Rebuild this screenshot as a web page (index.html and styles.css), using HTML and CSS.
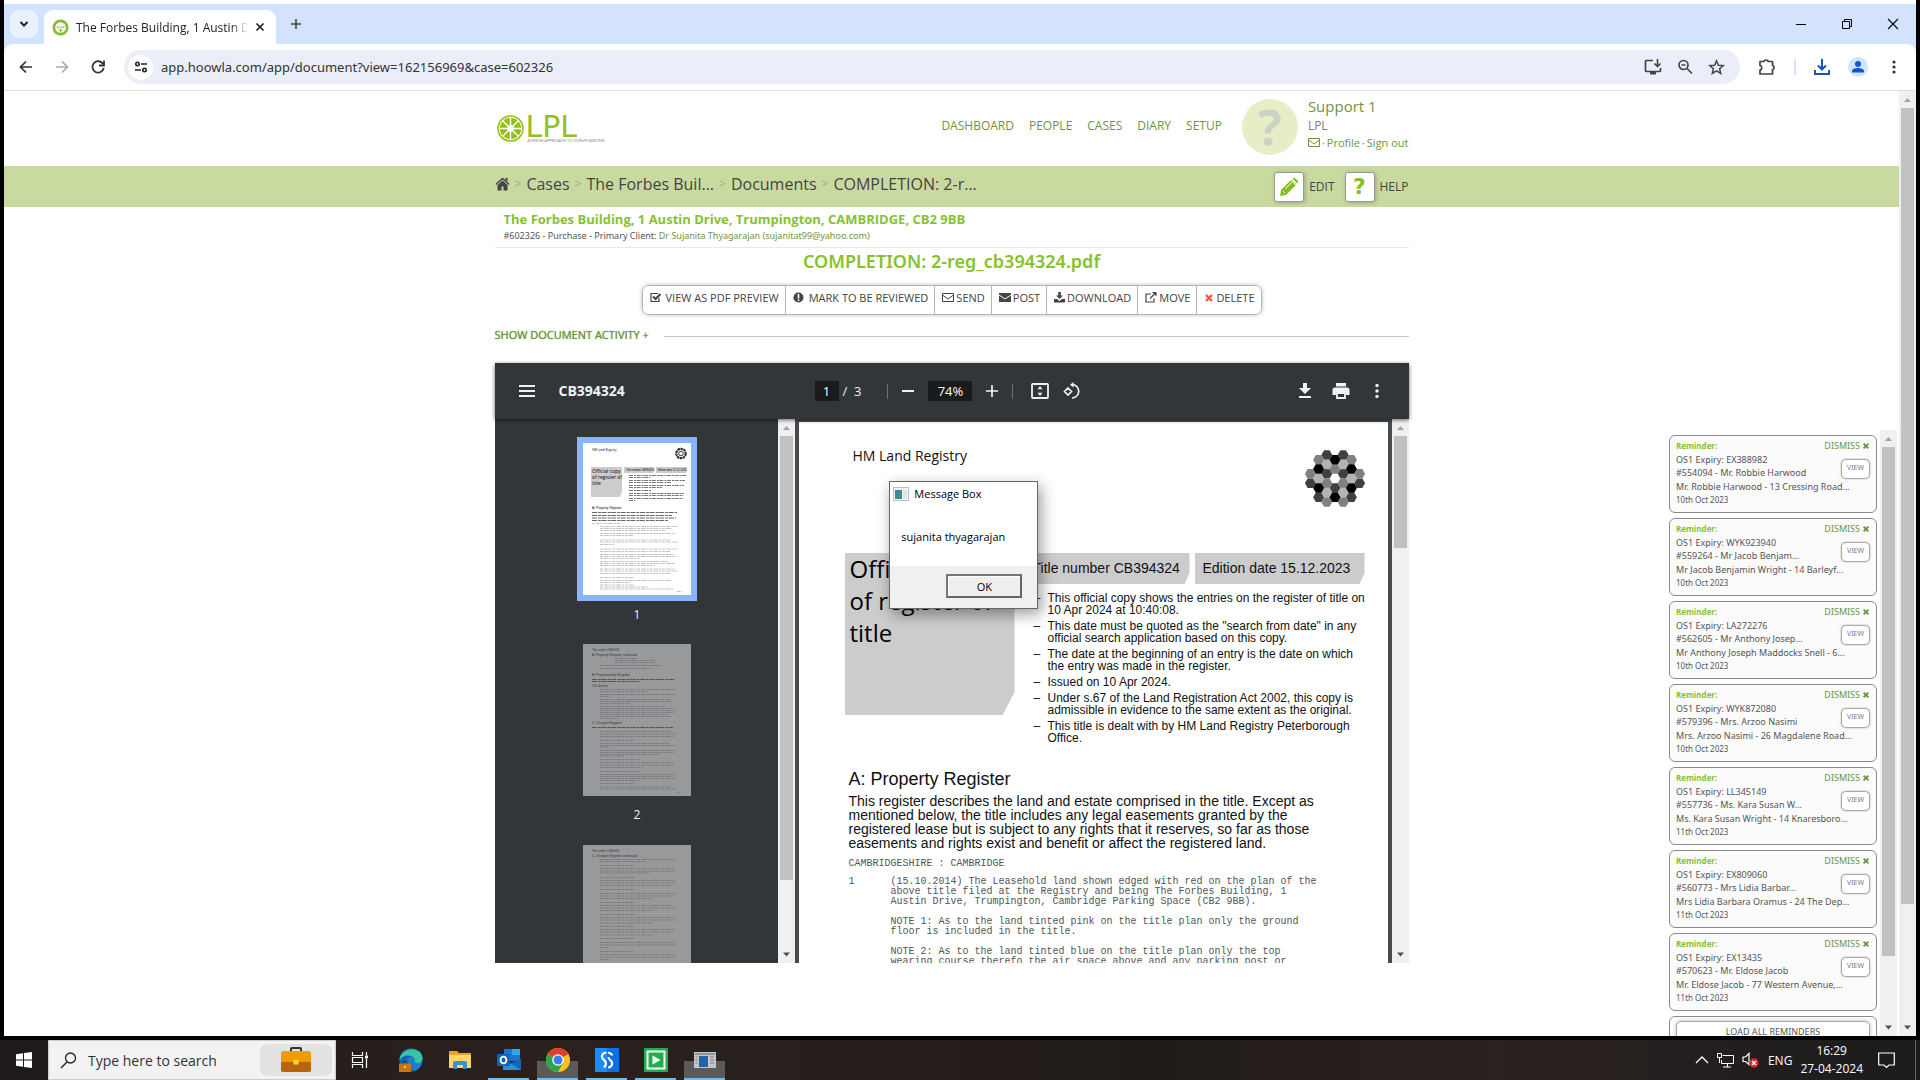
FILE: index.html
```html
<!DOCTYPE html>
<html lang="en">
<head>
<meta charset="utf-8">
<title>The Forbes Building, 1 Austin Drive</title>
<link rel="stylesheet" href="styles.css">
</head>
<body>
<svg class="defs" aria-hidden="true">
  <symbol id="i-x" viewBox="0 0 10 10"><path d="M2 2l6 6M8 2l-6 6" stroke="currentColor" stroke-width="2.4"/></symbol>
  <symbol id="i-mail" viewBox="0 0 12 11"><path d="M.5 1.5h11v8H.5zM.5 3l5.500 4 5.500-4" fill="none" stroke="currentColor"/></symbol>
  <symbol id="i-up" viewBox="0 0 17 17"><path d="M5 11l3.500-4 3.500 4z" fill="#a3a3a3"/></symbol>
  <symbol id="i-down" viewBox="0 0 17 17"><path d="M5 6.500l3.500 4 3.500-4z" fill="#505050"/></symbol>
  <symbol id="hex" viewBox="-6 -6 12 12"><path d="M-5.500 0l2.750-4.750h5.500L5.500 0l-2.750 4.750h-5.500z"/></symbol>
</svg>
<div class="desktop">
  <section class="browser">
    <div class="tabs">
      <button class="tab-search" aria-label="Search tabs"><svg width="10" height="10" viewBox="0 0 10 10"><path d="M1.500 3L5 6.500 8.500 3" fill="none" stroke="#222" stroke-width="2"/></svg></button>
      <div class="tab">
        <svg width="17" height="17" viewBox="0 0 17 17"><circle cx="8.500" cy="8.500" r="8" fill="#85bb36"/><circle cx="8.500" cy="8.500" r="5.300" fill="#fff"/><path d="M5 7a1.500 1.500 0 103 .5M9 7.500A1.500 1.500 0 1012 7M8.500 9.500v4M6.500 12l2-1.500 2 1.500" stroke="#85bb36" fill="none"/></svg>
        <span class="tab-title">The Forbes Building, 1 Austin Drive</span>
        <button class="bare" aria-label="Close tab"><svg width="10" height="10" viewBox="0 0 10 10"><path d="M1.500 1.500l7 7M8.500 1.500l-7 7" stroke="#222" stroke-width="1.700"/></svg></button>
      </div>
      <button class="bare new-tab" aria-label="New tab"><svg width="12" height="12" viewBox="0 0 12 12"><path d="M6 1v10M1 6h10" stroke="#444" stroke-width="1.600"/></svg></button>
      <div class="window-buttons">
        <button class="bare" aria-label="Minimise"><svg width="12" height="12"><path d="M1 6.500h10" stroke="#000"/></svg></button>
        <button class="bare" aria-label="Restore"><svg width="12" height="12"><path d="M1.500 3.500h7v7h-7zM3.500 3.500v-2h7v7h-2" fill="none" stroke="#000"/></svg></button>
        <button class="bare" aria-label="Close"><svg width="12" height="12"><path d="M1 1l10 10M11 1L1 11" stroke="#000" stroke-width="1.100"/></svg></button>
      </div>
    </div>
    <div class="toolbar">
      <button class="bare tool" aria-label="Back"><svg width="16" height="16" viewBox="0 0 16 16"><path d="M14 8H3M8 2.500L2.500 8 8 13.500" fill="none" stroke="#333" stroke-width="1.700"/></svg></button>
      <button class="bare tool" aria-label="Forward"><svg width="16" height="16" viewBox="0 0 16 16"><path d="M2 8h11M8 2.500L13.500 8 8 13.500" fill="none" stroke="#aaa" stroke-width="1.700"/></svg></button>
      <button class="bare tool" aria-label="Reload"><svg width="16" height="16" viewBox="0 0 16 16"><path d="M13 5A5.700 5.700 0 1013.700 9M14 1.500v5H9" fill="none" stroke="#333" stroke-width="1.800"/></svg></button>
      <div class="omnibox">
        <span class="site-info"><svg width="14" height="14" viewBox="0 0 14 14"><g fill="none" stroke="#222" stroke-width="1.600"><circle cx="3.500" cy="4" r="1.700"/><path d="M7 4h6M1 10h6"/><circle cx="10.500" cy="10" r="1.700"/></g></svg></span>
        <input class="url" aria-label="Address" value="app.hoowla.com/app/document?view=162156969&amp;case=602326">
        <button class="bare" aria-label="Install"><svg width="18" height="16" viewBox="0 0 18 16"><path d="M9 1.500H2.500a1 1 0 00-1 1v9a1 1 0 001 1h13a1 1 0 001-1V9" fill="none" stroke="#444" stroke-width="1.700"/><path d="M6 13h6v2.500H6z" fill="#444"/><path d="M13.500 0v7M10.500 4.500l3 3 3-3" fill="none" stroke="#444" stroke-width="1.600"/></svg></button>
        <button class="bare" aria-label="Zoom"><svg width="16" height="16" viewBox="0 0 16 16"><g fill="none" stroke="#444" stroke-width="1.700"><circle cx="6.500" cy="6" r="4.500"/><path d="M10 9.500l5 5M4.500 6h4"/></g></svg></button>
        <button class="bare" aria-label="Bookmark"><svg width="17" height="16" viewBox="0 0 17 16"><path d="M8.500 1.800l1.900 4.400 4.800.4-3.600 3.100 1.100 4.700-4.200-2.500-4.200 2.500 1.100-4.700-3.600-3.100 4.800-.4z" fill="none" stroke="#444" stroke-width="1.500"/></svg></button>
      </div>
      <button class="bare" aria-label="Extensions"><svg width="18" height="18" viewBox="0 0 18 18"><path d="M2 3.500h4a2 1.500 0 014 0h4.500v4a1.500 2 0 010 4V16H2v-4a1.500 2 0 000-4.500z" fill="none" stroke="#444" stroke-width="1.700" stroke-linejoin="round"/></svg></button>
      <span class="tool-divider"></span>
      <button class="bare" aria-label="Downloads"><svg width="16" height="16" viewBox="0 0 16 16"><path d="M8 0v10M4 6.500l4 4 4-4M1 11v4h14v-4" fill="none" stroke="#1456b8" stroke-width="2"/></svg></button>
      <button class="bare account-button" aria-label="Account"><svg width="20" height="20"><circle cx="10" cy="10" r="10" fill="#d3e3fd"/><circle cx="10" cy="7" r="3" fill="#0b57d0"/><path d="M4 15.500v-1.500c0-4 12-4 12 0v1.500z" fill="#0b57d0"/></svg></button>
      <button class="bare" aria-label="Menu"><svg width="4" height="16"><g fill="#333"><circle cx="2" cy="3" r="1.600"/><circle cx="2" cy="8" r="1.600"/><circle cx="2" cy="13" r="1.600"/></g></svg></button>
    </div>

    <div class="viewport">
      <main class="site">
        <header class="container site-head">
          <a class="logo" href="#" aria-label="LPL home">
            <svg width="27" height="27" viewBox="0 0 27 27"><g fill="none" stroke="#93c01f"><circle cx="13.500" cy="13.500" r="12.500" stroke-width="1.600"/><circle cx="13.500" cy="13.500" r="7" stroke-width="7.500"/></g><path d="M13.500 2v23M2 13.500h23M5.400 5.400l16.200 16.200M21.600 5.400L5.400 21.600" stroke="#fff" stroke-width="1.400"/><circle cx="13.500" cy="13.500" r="3" fill="#fff"/></svg>
            <span class="logo-words"><span class="logo-name">LPL</span><span class="logo-tag">A FRESH APPROACH TO CONVEYANCING</span></span>
          </a>
          <nav class="main-nav"><a href="#">DASHBOARD</a><a href="#">PEOPLE</a><a href="#">CASES</a><a href="#">DIARY</a><a href="#">SETUP</a></nav>
          <div class="avatar">?</div>
          <div class="account">
            <a class="account-name" href="#">Support 1</a>
            <span>LPL</span>
            <span class="account-links"><a href="#" aria-label="Messages"><svg width="12" height="11"><use href="#i-mail"/></svg></a> · <a href="#">Profile</a> · <a href="#">Sign out</a></span>
          </div>
        </header>
        <div class="crumb-bar">
          <div class="container crumb-row">
            <nav class="crumbs" aria-label="Breadcrumb">
              <a href="#" aria-label="Home"><svg width="15" height="14" viewBox="0 0 15 14"><path d="M7.500 3.500L2.500 8v5.500h4v-4h2v4h4V8z" fill="#444"/><path d="M.8 7.500l6.700-6 6.700 6" fill="none" stroke="#444" stroke-width="1.500"/><path d="M10.500 1h2v3.500l-2-1.500z" fill="#444"/></svg></a>
              <i>&gt;</i><a href="#">Cases</a><i>&gt;</i><a href="#">The Forbes Buil...</a><i>&gt;</i><a href="#">Documents</a><i>&gt;</i><span>COMPLETION: 2-r...</span>
            </nav>
            <button class="bar-action"><span class="tile"><svg width="20" height="20" viewBox="0 0 20 20"><path d="M1 19l1-6L12.500 2.500l5 5L7 18z" fill="#86bf22"/><path d="M13.500 1.500q1.500-1.500 3 0l2 2q1.500 1.500 0 3z" fill="#86bf22"/><path d="M4 14l2 2M6 12l7-7M12 3.200l4.800 4.800" stroke="#fff"/></svg></span>EDIT</button>
            <button class="bar-action"><span class="tile tile-mark">?</span>HELP</button>
          </div>
        </div>
        <div class="container">
          <div class="case-head">
            <h1>The Forbes Building, 1 Austin Drive, Trumpington, CAMBRIDGE, CB2 9BB</h1>
            <p>#602326 - Purchase - Primary Client: <a href="#">Dr Sujanita Thyagarajan (sujanitat99@yahoo.com)</a></p>
          </div>
          <h2 class="doc-title">COMPLETION: 2-reg_cb394324.pdf</h2>
          <div class="doc-actions">
            <button><svg width="11" height="11" viewBox="0 0 11 11"><path d="M9 6v3.500H1v-8h7" fill="none" stroke="#444" stroke-width="1.200"/><path d="M3 4.500l2.500 2.500 5-5" fill="none" stroke="#444" stroke-width="2"/></svg><span class="wide">VIEW AS PDF PREVIEW</span></button>
            <button><svg width="11" height="11" viewBox="0 0 11 11"><circle cx="5.500" cy="5.500" r="5" fill="#444"/><path d="M5.500 2v4.500M5.500 7.500V9" stroke="#fff" stroke-width="1.700"/></svg><span class="wide">MARK TO BE REVIEWED</span></button>
            <button><svg width="12" height="11"><use href="#i-mail"/></svg><span>SEND</span></button>
            <button><svg width="12" height="11" viewBox="0 0 12 11"><path d="M0 1h12v9H0z" fill="#444"/><path d="M0 3l6 4 6-4" fill="none" stroke="#fff"/></svg><span>POST</span></button>
            <button><svg width="11" height="11" viewBox="0 0 11 11"><path d="M4.200 0h2.600v3.500H9L5.500 7 2 3.500h2.200zM0 7h3l2.500 2L8 7h3v3.500H0z" fill="#444"/></svg><span>DOWNLOAD</span></button>
            <button><svg width="12" height="11" viewBox="0 0 12 11"><path d="M6 2H1v8h8V6.500M5 6.500l5-5" fill="none" stroke="#444" stroke-width="1.200"/><path d="M7 0h4.500v4.500z" fill="#444"/></svg><span>MOVE</span></button>
            <button><svg width="10" height="10" color="#fa5a3c"><use href="#i-x"/></svg><span>DELETE</span></button>
          </div>
          <div class="activity"><a href="#">SHOW DOCUMENT ACTIVITY +</a><hr></div>

          <section class="pdf">
            <div class="pdf-bar">
              <div class="pdf-left">
                <button class="bare" aria-label="Sidebar"><svg width="16" height="12"><path d="M0 1h16M0 6h16M0 11h16" stroke="#f1f1f1" stroke-width="2"/></svg></button>
                <strong>CB394324</strong>
              </div>
              <div class="pdf-mid">
                <input class="pdf-page" aria-label="Page" value="1"><span class="pdf-total">/&nbsp; 3</span>
                <span class="pdf-divider"></span>
                <button class="bare" aria-label="Zoom out"><svg width="12" height="12"><path d="M0 6h12" stroke="#f1f1f1" stroke-width="2"/></svg></button>
                <input class="pdf-zoom" aria-label="Zoom level" value="74%">
                <button class="bare" aria-label="Zoom in"><svg width="12" height="12"><path d="M0 6h12M6 0v12" stroke="#f1f1f1" stroke-width="1.700"/></svg></button>
                <span class="pdf-divider"></span>
                <button class="bare fit" aria-label="Fit to page"><svg width="18" height="16" viewBox="0 0 18 16"><rect x="1" y="1" width="16" height="14" rx="1" fill="none" stroke="#f1f1f1" stroke-width="1.800"/><path d="M9 3l2.500 3.200h-5zM9 13l2.500-3.200h-5z" fill="#f1f1f1"/></svg></button>
                <button class="bare" aria-label="Rotate"><svg width="18" height="18" viewBox="0 0 18 18"><path d="M5 6l3.500 3.500L5 13 1.500 9.500zM9 2.500A6.500 6.500 0 119 16" fill="none" stroke="#f1f1f1" stroke-width="1.700"/><path d="M10.500 0v5.500L7 2.700z" fill="#f1f1f1"/></svg></button>
              </div>
              <div class="pdf-right">
                <button class="bare" aria-label="Download"><svg width="12" height="16" viewBox="0 0 12 16"><path d="M4 0h4v5h4l-6 6-6-6h4zM0 13h12v2H0z" fill="#f1f1f1"/></svg></button>
                <button class="bare" aria-label="Print"><svg width="18" height="16" viewBox="0 0 18 16"><path d="M4 0h10v3.500H4zM3 4.500h12q2.500 0 2.500 2.500v5H14V9H4v3H.5V7Q.5 4.500 3 4.500z" fill="#f1f1f1"/><path d="M5 10h8v5H5z" fill="none" stroke="#f1f1f1" stroke-width="1.800"/></svg></button>
                <button class="bare pdf-more" aria-label="More"><svg width="4" height="16"><g fill="#f1f1f1"><circle cx="2" cy="2.500" r="1.700"/><circle cx="2" cy="8" r="1.700"/><circle cx="2" cy="13.500" r="1.700"/></g></svg></button>
              </div>
            </div>
            <div class="pdf-body">
              <div class="thumbs">
                <figure class="current">
                  <svg viewBox="0 0 108 152">
                    <g font-family="Open Sans, sans-serif"><text x="9" y="8" font-size="3">HM Land Registry</text></g>
                    <path d="M8 24h31v25l-2 5H8zM41 24h30v4l-1 2H41zM73 24h31v4l-1 2H73z" fill="#ccc"/>
                    <g font-family="Open Sans, sans-serif" font-size="5"><text x="9" y="30">Official copy</text><text x="9" y="36">of register of</text><text x="9" y="42">title</text></g>
                    <g font-family="Liberation Sans, sans-serif"><text x="43" y="28" font-size="2.700">Title number CB394324</text><text x="75" y="28" font-size="2.700">Edition date 15.12.2023</text><text x="9" y="66" font-size="3.300">A: Property Register</text></g>
                    <g fill="#333"><circle cx="98" cy="10.500" r="4.700" fill="none" stroke="#333" stroke-width="2.200" stroke-dasharray="2.500 .5"/><circle cx="98" cy="10.500" r="2.300" fill="none" stroke="#333"/></g>
                    <path d="M46 32.500h57M46 34.500h21M46 37.500h56M46 39.500h43M46 42.500h55M46 44.500h33M46 47.500h22M46 50.500h55M46 52.500h54M46 55.500h54M46 57.500h6" stroke="#777" stroke-dasharray="4 1 2 .6"/>
                    <path d="M9 69.500h85M9 72.500h80M9 75h84M9 77.500h76" stroke="#666" stroke-width="1.200" stroke-dasharray="5 1 3 .6"/>
                    <path d="M9 80.500h29M17 83.500h78M17 85.500h72M17 87.500h66M17 90.500h75M17 92.500h33M17 97h70M17 99h78M17 101.500h14M17 106h77M17 108.500h70M17 111.500h75M17 113.500h76M17 115.500h40M17 118.500h68M17 120.500h75M17 122.500h55M17 126h75M17 128h77M17 130.500h70M17 134.500h34M17 137.500h71M17 139.500h30M17 142h34M17 144h48M17 146h73M94 148.500h5" stroke="#b5b5b5" stroke-width=".8" stroke-dasharray="3 .8 5 .8 2 .8"/>
                  </svg>
                  <figcaption>1</figcaption>
                </figure>
                <figure>
                  <svg viewBox="0 0 108 152">
                    <g font-family="Liberation Sans, sans-serif" fill="#333"><text x="9" y="7" font-size="2.600">Title number CB394324</text><text x="9" y="12" font-size="3.300">A: Property Register continued</text><text x="9" y="32" font-size="3.300">B: Proprietorship Register</text><text x="9" y="43" font-size="2.700">Title absolute</text><text x="9" y="80" font-size="3.300">C: Charges Register</text></g>
                    <path d="M9 35.500h83M9 37.500h48M9 83.500h81" stroke="#555" stroke-dasharray="5 1 3 .6"/>
                    <path d="M32 14.500h22M32 16.500h42M32 18.500h40M17 21.500h61M17 24.500h51M17 45.500h76M17 47.500h48M17 50.500h75M17 52.500h10M17 55.500h70M17 57.500h74M17 59.500h30M17 62.500h65M17 64.500h72M17 66.500h75M17 68.500h74M17 70.500h68M17 72.500h71M17 74.500h18M17 87.500h71M17 90h76M17 92.500h74M17 96.500h35M17 99.500h69M17 101.500h74M17 103h10M17 106.500h76M17 108.500h74M17 110.500h60M17 112h25M17 115.500h40M17 118.500h75M17 121h73M17 123.500h43M17 127.500h40M17 130.500h75M17 132.500h71M17 134.500h76M17 136.500h39M17 139.500h35M17 143h70M17 145h76M93 148.500h5" stroke="#74767a" stroke-width=".8" stroke-dasharray="3 .8 5 .8 2 .8"/>
                  </svg>
                  <figcaption>2</figcaption>
                </figure>
                <figure>
                  <svg viewBox="0 0 108 152">
                    <g font-family="Liberation Sans, sans-serif" fill="#333"><text x="9" y="7" font-size="2.600">Title number CB394324</text><text x="9" y="12" font-size="3.300">C: Charges Register continued</text></g>
                    <path d="M17 14.500h75M17 16.500h45M17 20.500h34M17 23.500h75M17 26h75M17 28h50M17 32.500h35M17 35.500h75M17 38h76M17 40.500h70M17 44.500h35M17 48.500h76M17 51h74M17 53.500h53M17 57.500h34M17 60.500h72M17 63h76M17 65.500h53M17 69.500h35M17 72.500h75M17 75h76M17 78h53M17 81.500h34M17 84.500h75M17 87h74M17 90h53M17 93.500h34M17 97.500h76M17 100h76M17 102.500h10M17 106.500h34M17 109.500h76M17 112h75M17 114.500h10" stroke="#74767a" stroke-width=".8" stroke-dasharray="3 .8 5 .8 2 .8"/>
                  </svg>
                </figure>
              </div>
              <div class="scroll"><svg><use href="#i-up"/></svg><span class="track"><span class="thumb" style="height:87%"></span></span><svg><use href="#i-down"/></svg></div>
              <div class="sheet-area">
                <article class="sheet">
                  <header class="sheet-head">
                    <span>HM Land Registry</span>
                    <svg width="60" height="58" viewBox="0 0 60 58">
                      <g fill="#404040"><use href="#hex" x="15.800" y="-1" width="12" height="12"/><use href="#hex" x="32.200" y="-1" width="12" height="12"/><use href="#hex" x="15.800" y="17.800" width="12" height="12"/><use href="#hex" x="32.200" y="17.800" width="12" height="12"/><use href="#hex" x="-.6" y="27.200" width="12" height="12"/><use href="#hex" x="48.600" y="27.200" width="12" height="12"/><use href="#hex" x="7.600" y="41.300" width="12" height="12"/><use href="#hex" x="40.400" y="41.300" width="12" height="12"/><use href="#hex" x="24" y="31.900" width="12" height="12"/></g>
                      <g fill="#808080"><use href="#hex" x="7.600" y="3.700" width="12" height="12"/><use href="#hex" x="40.400" y="3.700" width="12" height="12"/><use href="#hex" x="24" y="13.100" width="12" height="12"/><use href="#hex" x="-.6" y="17.800" width="12" height="12"/><use href="#hex" x="48.600" y="17.800" width="12" height="12"/><use href="#hex" x="15.800" y="27.200" width="12" height="12"/><use href="#hex" x="32.200" y="27.200" width="12" height="12"/><use href="#hex" x="15.800" y="46" width="12" height="12"/><use href="#hex" x="32.200" y="46" width="12" height="12"/></g>
                      <g fill="#b3b3b3"><use href="#hex" x="15.800" y="8.400" width="12" height="12"/><use href="#hex" x="32.200" y="8.400" width="12" height="12"/><use href="#hex" x="7.600" y="22.500" width="12" height="12"/><use href="#hex" x="40.400" y="22.500" width="12" height="12"/><use href="#hex" x="15.800" y="36.600" width="12" height="12"/><use href="#hex" x="32.200" y="36.600" width="12" height="12"/></g>
                      <g fill="#000"><use href="#hex" x="24" y="3.700" width="12" height="12"/><use href="#hex" x="7.600" y="13.100" width="12" height="12"/><use href="#hex" x="40.400" y="13.100" width="12" height="12"/><use href="#hex" x="7.600" y="31.900" width="12" height="12"/><use href="#hex" x="40.400" y="31.900" width="12" height="12"/><use href="#hex" x="24" y="41.300" width="12" height="12"/></g>
                    </svg>
                  </header>
                  <div class="cover">
                    <div class="cover-title">Official copy of register of title</div>
                    <div class="cover-info">
                      <div class="plates"><span>Title number CB394324</span><span>Edition date 15.12.2023</span></div>
                      <ul>
                        <li>This official copy shows the entries on the register of title on<br>10 Apr 2024 at 10:40:08.</li>
                        <li>This date must be quoted as the "search from date" in any<br>official search application based on this copy.</li>
                        <li>The date at the beginning of an entry is the date on which<br>the entry was made in the register.</li>
                        <li>Issued on 10 Apr 2024.</li>
                        <li>Under s.67 of the Land Registration Act 2002, this copy is<br>admissible in evidence to the same extent as the original.</li>
                        <li>This title is dealt with by HM Land Registry Peterborough<br>Office.</li>
                      </ul>
                    </div>
                  </div>
                  <div class="register">
                    <h3>A: Property Register</h3>
                    <p class="lead">This register describes the land and estate comprised in the title. Except as<br>mentioned below, the title includes any legal easements granted by the<br>registered lease but is subject to any rights that it reserves, so far as those<br>easements and rights exist and benefit or affect the registered land.</p>
                    <p class="mono">CAMBRIDGESHIRE : CAMBRIDGE</p>
                    <div class="entry mono"><span>1</span><div>
                      <p>(15.10.2014) The Leasehold land shown edged with red on the plan of the<br>above title filed at the Registry and being The Forbes Building, 1<br>Austin Drive, Trumpington, Cambridge Parking Space (CB2 9BB).</p>
                      <p>NOTE 1: As to the land tinted pink on the title plan only the ground<br>floor is included in the title.</p>
                      <p>NOTE 2: As to the land tinted blue on the title plan only the top<br>wearing course therefo the air space above and any parking post or</p>
                    </div></div>
                  </div>
                </article>
              </div>
              <div class="scroll"><svg><use href="#i-up"/></svg><span class="track"><span class="thumb" style="height:22%"></span></span><svg><use href="#i-down"/></svg></div>
            </div>
            <div class="message" role="dialog" aria-label="Message Box">
              <div class="message-title"><svg width="16" height="14"><rect x=".5" y=".5" width="15" height="13" fill="#f4f6f8" stroke="#b9c0c8"/><path d="M2 3h7v9H2z" fill="#3f8f86"/><path d="M2 3h3v4H2z" fill="#4a78b8"/><path d="M10 3h4v9h-4z" fill="#dfe4ea"/></svg>Message Box</div>
              <p>sujanita thyagarajan</p>
              <div class="message-foot"><button>OK</button></div>
            </div>
          </section>
        </div>
      </main>

      <aside class="reminders">
        <div class="reminder-list">
          <article class="reminder"><header><b>Reminder:</b><button class="dismiss">DISMISS <svg width="8" height="8"><use href="#i-x"/></svg></button></header><button class="view">VIEW</button><p>OS1 Expiry: EX388982</p><p>#554094 - Mr. Robbie Harwood</p><p class="place">Mr. Robbie Harwood - 13 Cressing Road...</p><time>10th Oct 2023</time></article>
          <article class="reminder"><header><b>Reminder:</b><button class="dismiss">DISMISS <svg width="8" height="8"><use href="#i-x"/></svg></button></header><button class="view">VIEW</button><p>OS1 Expiry: WYK923940</p><p>#559264 - Mr Jacob Benjam...</p><p class="place">Mr Jacob Benjamin Wright - 14 Barleyf...</p><time>10th Oct 2023</time></article>
          <article class="reminder"><header><b>Reminder:</b><button class="dismiss">DISMISS <svg width="8" height="8"><use href="#i-x"/></svg></button></header><button class="view">VIEW</button><p>OS1 Expiry: LA272276</p><p>#562605 - Mr Anthony Josep...</p><p class="place">Mr Anthony Joseph Maddocks Snell - 6...</p><time>10th Oct 2023</time></article>
          <article class="reminder"><header><b>Reminder:</b><button class="dismiss">DISMISS <svg width="8" height="8"><use href="#i-x"/></svg></button></header><button class="view">VIEW</button><p>OS1 Expiry: WYK872080</p><p>#579396 - Mrs. Arzoo Nasimi</p><p class="place">Mrs. Arzoo Nasimi - 26 Magdalene Road...</p><time>10th Oct 2023</time></article>
          <article class="reminder"><header><b>Reminder:</b><button class="dismiss">DISMISS <svg width="8" height="8"><use href="#i-x"/></svg></button></header><button class="view">VIEW</button><p>OS1 Expiry: LL345149</p><p>#557736 - Ms. Kara Susan W...</p><p class="place">Ms. Kara Susan Wright - 14 Knaresboro...</p><time>11th Oct 2023</time></article>
          <article class="reminder"><header><b>Reminder:</b><button class="dismiss">DISMISS <svg width="8" height="8"><use href="#i-x"/></svg></button></header><button class="view">VIEW</button><p>OS1 Expiry: EX809060</p><p>#560773 - Mrs Lidia Barbar...</p><p class="place">Mrs Lidia Barbara Oramus - 24 The Dep...</p><time>11th Oct 2023</time></article>
          <article class="reminder"><header><b>Reminder:</b><button class="dismiss">DISMISS <svg width="8" height="8"><use href="#i-x"/></svg></button></header><button class="view">VIEW</button><p>OS1 Expiry: EX13435</p><p>#570623 - Mr. Eldose Jacob</p><p class="place">Mr. Eldose Jacob - 77 Western Avenue,...</p><time>11th Oct 2023</time></article>
          <div class="load-all"><button>LOAD ALL REMINDERS</button></div>
        </div>
        <div class="scroll"><svg><use href="#i-up"/></svg><span class="track"><span class="thumb" style="height:89%"></span></span><svg><use href="#i-down"/></svg></div>
      </aside>
      <div class="scroll"><svg><use href="#i-up"/></svg><span class="track"><span class="thumb" style="height:87.400%"></span></span><svg><use href="#i-down"/></svg></div>
    </div>
  </section>

  <footer class="taskbar">
    <button class="bare start" aria-label="Start"><svg width="16" height="16"><path d="M0 2.200L7 1.200V7.500H0zM8 1l8-1v7.500H8zM0 8.500h7v6.300l-7-1zM8 8.500h8V16l-8-1z" fill="#fff"/></svg></button>
    <div class="search">
      <svg width="17" height="17" viewBox="0 0 17 17"><circle cx="10.500" cy="6" r="5" fill="none" stroke="#222" stroke-width="1.300"/><path d="M7 10l-6 6" stroke="#222" stroke-width="1.400"/></svg>
      <input aria-label="Search" placeholder="Type here to search">
      <span class="search-art"><svg width="32" height="26" viewBox="0 0 32 26"><path d="M11 4V2q0-1 1-1h8q1 0 1 1v2" fill="none" stroke="#333" stroke-width="2"/><rect x="1" y="4" width="30" height="21" rx="2" fill="#f29a05"/><path d="M1 15h30v8q0 2-2 2H3q-2 0-2-2z" fill="#b8650f"/><path d="M13.500 12.500h5v5h-5z" fill="#ffd42a"/></svg></span>
    </div>
    <button class="app task-view" aria-label="Task view"><svg width="18" height="18" viewBox="0 0 18 18"><path d="M1.500 1v3.500h10V1M1.500 17v-3.500h10V17M1.500 6.500h10v5h-10zM15.500 1v3M15.500 8v9" fill="none" stroke="#fff" stroke-width="1.200"/><path d="M14 4.500h3v3h-3z" fill="#fff"/></svg></button>
    <button class="app" aria-label="Edge"><svg width="26" height="24" viewBox="0 0 26 24"><circle cx="13" cy="12" r="11.500" fill="#1b7fd0"/><path d="M1.500 12C2 0 24-3 24.500 10c0 6-7 6-8 4 2-5-4-7-8-5-3 1.500-5 3-7 3z" fill="#35c4a5"/><path d="M9 11c-3 6 3 11 9 11-6 3-15 0-16-8 0-6 8-8 12-5-3 0-4 1-5 2z" fill="#1463b0"/><path d="M1 15.500h12V24H1z" fill="#c87412"/><path d="M5 15.500V13.500h4v2" stroke="#333" fill="none"/><path d="M6 18h2v2H6z" fill="#ffd42a"/></svg></button>
    <button class="app" aria-label="File Explorer"><svg width="24" height="20" viewBox="0 0 24 20"><path d="M1 1h8l2 2h12v15H1z" fill="#e8a722"/><path d="M1 5h22v13H1z" fill="#ffd667"/><path d="M5 19v-6q0-2 2-2h10q2 0 2 2v6h-4v-4H9v4z" fill="#3d8fd1"/></svg></button>
    <button class="app open" aria-label="Outlook"><svg width="24" height="24" viewBox="0 0 24 24"><path d="M7 1h16v12H7z" fill="#1a77cf"/><path d="M15 1h8v6h-8z" fill="#36a6ea"/><path d="M6 11l9 5 9-5v11H6z" fill="#2693e0"/><path d="M24 11v11L13 15z" fill="#1464b5"/><path d="M0 6h13v12H0z" fill="#0f63b8"/><ellipse cx="6.500" cy="12" rx="3" ry="3.400" fill="none" stroke="#fff" stroke-width="1.800"/></svg></button>
    <button class="app open lit" aria-label="Chrome"><svg width="24" height="24" viewBox="0 0 24 24"><circle cx="12" cy="12" r="12" fill="#fcc31e"/><path d="M12 12L1.600 6A12 12 0 0122.400 6z" fill="#e33b2e"/><path d="M12 12L1.600 6A12 12 0 0012 24l5-9z" fill="#2da44e"/><circle cx="12" cy="12" r="5.800" fill="#fff"/><circle cx="12" cy="12" r="4.500" fill="#3b7ded"/></svg></button>
    <button class="app open" aria-label="Sync app"><svg width="24" height="24" viewBox="0 0 24 24"><path d="M0 0h24v24H0z" fill="#0a6fe8"/><path d="M0 0h12v24H0z" fill="#1a8cf5"/><path d="M11.500 4.500Q7 5 7 8.500q0 2 2 3.500t2 3.500-2 4M13 4.500q4 1 4 3M13.500 9q0 2 2 3.500t1.500 4-4 3" fill="none" stroke="#fff" stroke-width="2.200"/></svg></button>
    <button class="app open" aria-label="Player"><svg width="24" height="24" viewBox="0 0 24 24"><path d="M0 0h24v24H0z" fill="#1fae4d"/><path d="M3.500 3.500h17v17h-17z" fill="none" stroke="#fff" stroke-width="2"/><path d="M8.500 7.500l8 4.500-8 4.500z" fill="#fff"/></svg></button>
    <button class="app open lit" aria-label="Message Box"><svg width="22" height="16" viewBox="0 0 22 16"><path d="M0 0h22v16H0z" fill="#c3c7cb"/><path d="M1 1h20v2H1z" fill="#8d9399"/><path d="M5 4h9v11H5z" fill="#1e66a8"/><path d="M16 5h4M16 8h4M16 11h4M1.500 5h2M1.500 8h2M1.500 11h2" stroke="#777"/></svg></button>
    <div class="tray">
      <svg width="14" height="10"><path d="M1 8l6-6 6 6" fill="none" stroke="#fff" stroke-width="1.300"/></svg>
      <svg width="17" height="15" viewBox="0 0 17 15"><path d="M5.500 2.500h11v8h-12V7M10.500 11v3M6 14h8M.5.500h4v4h-4zM2.500 4.500V10" fill="none" stroke="#fff"/></svg>
      <svg width="18" height="16" viewBox="0 0 18 16"><path d="M1 5h2.500L7 1.500v11L3.500 9.500H1z" fill="none" stroke="#fff" stroke-width="1.200"/><circle cx="12" cy="11" r="4.700" fill="#e0222c"/><path d="M10 9l4 4M14 9l-4 4" stroke="#fff" stroke-width="1.400"/></svg>
      <span>ENG</span>
      <time class="clock">16:29<br>27-04-2024</time>
      <svg class="notice" width="17" height="17" viewBox="0 0 17 17"><path d="M.7 1h15.600v12H11l-2.500 2.500L6 13H.7z" fill="none" stroke="#fff" stroke-width="1.200"/></svg>
    </div>
  </footer>
</div>
</body>
</html>
```
FILE: styles.css
```css
* { box-sizing: border-box; }
body, h1, h2, h3, p, ul, figure { margin: 0; padding: 0; }
body { font-family: "Open Sans", sans-serif; color: #444; background: #000; }
svg { display: block; flex: none; }
a { color: #6f9440; text-decoration: none; }
button, input { font-family: inherit; }
.defs { position: absolute; width: 0; height: 0; }
.bare { display: block; flex: none; padding: 0; border: 0; background: none; }

.desktop { display: flex; flex-direction: column; height: 100vh; overflow: hidden; }
.browser { flex: 1; min-height: 0; display: flex; flex-direction: column; margin: 0 4px 4px; border-top: 4px solid #fff; background: #d3e3fd; }

/* tab strip */
.tabs { display: flex; align-items: center; height: 40px; flex: none; padding-left: 6px; }
.tab-search { display: grid; place-items: center; width: 28px; height: 28px; padding: 0; border: 0; border-radius: 9px; background: #e9f0fe; }
.tab { align-self: flex-end; display: flex; align-items: center; gap: 7px; width: 232px; height: 34px; margin-left: 6px; padding: 0 11px 0 8px; border-radius: 9px 9px 0 0; background: #fff; }
.tab-title { flex: 1; overflow: hidden; white-space: nowrap; font-size: 12px; color: #222; mask-image: linear-gradient(90deg, #000 90%, transparent); }
.new-tab { margin-left: 14px; }
.window-buttons { display: flex; gap: 34px; margin-left: auto; padding-right: 17px; }

/* toolbar */
.toolbar { display: flex; align-items: center; height: 47px; flex: none; padding: 0 20px 0 14px; gap: 18px; border-bottom: 1px solid #dcdcdc; border-radius: 9px 9px 0 0; background: #fff; }
.tool { margin-right: 2px; }
.account-button { margin-right: 6px; }
.omnibox { flex: 1; display: flex; align-items: center; gap: 15px; height: 34px; padding: 0 15px 0 4px; margin-left: -2px; border-radius: 17px; background: #ebeef8; }
.site-info { display: grid; place-items: center; width: 25px; height: 25px; border-radius: 50%; background: #fff; }
.url { flex: 1; border: 0; padding: 0; margin-left: -7px; background: none; font: 13px/20px "Noto Sans", sans-serif; color: #333; outline: 0; }
.tool-divider { width: 2px; height: 16px; background: #d3e3fd; }

/* page viewport */
.viewport { position: relative; flex: 1; min-height: 0; display: flex; background: #fff; overflow: hidden; }
.site { flex: 1; min-width: 0; overflow: hidden; }
.container { width: 914px; max-width: 100%; margin: 0 auto; }

.scroll { flex: none; display: flex; flex-direction: column; width: 17px; background: #f0f0f0; }
.scroll svg { width: 17px; height: 17px; }
.track { flex: 1; padding: 0 2px; }
.thumb { display: block; background: #c1c1c1; }

/* site header */
.site-head { display: flex; align-items: center; height: 75px; }
.logo { display: flex; gap: 2px; margin: 0 auto 0 2px; color: #93c01f; }
.logo-words { display: flex; flex-direction: column; }
.logo-name { font: 30px/23px "DejaVu Sans", sans-serif; }
.logo-tag { margin: 0 0 0 2px; font: 4px/5px Lato, sans-serif; color: #888; }
.main-nav { display: flex; gap: 15px; margin-right: 20px; padding-bottom: 6px; font-size: 12px; }
.avatar { display: grid; place-items: center; width: 56px; height: 56px; margin: 0 10px 4px 0; border-radius: 50%; background: #e7eec6; color: #ccd3c4; font: 700 50px/56px "Open Sans", sans-serif; }
.account { display: flex; flex-direction: column; padding-bottom: 10px; font-size: 12px; line-height: 18px; color: #7c8078; }
.account-name { margin-bottom: 2px; font-size: 15px; }
.account-links { display: flex; align-items: center; gap: 2px; font-size: 11px; line-height: 16px; }

.crumb-bar { background: #c8da9f; }
.crumb-row { display: flex; align-items: center; height: 41px; }
.crumbs { display: flex; align-items: center; gap: 5px; margin-right: auto; padding-bottom: 5px; font-size: 16px; line-height: 22px; }
.crumbs a, .crumbs span { color: #444; }
.crumbs i { font-style: normal; font-size: 12px; color: #9fae80; }
.bar-action { display: flex; align-items: center; gap: 5px; margin-left: 10px; padding: 0; border: 0; background: none; font-size: 12px; color: #444; }
.tile { display: grid; place-items: center; width: 30px; height: 30px; border: 1px solid #999; border-radius: 3px; background: #fff; box-shadow: 1px 1px 4px #7778; }
.tile-mark { font: 700 22px/28px "DejaVu Sans", sans-serif; color: #86bf22; }

/* case heading */
.case-head { padding: 2px 9px 5px; border-bottom: 1px solid #e8e8e8; }
.case-head h1 { font-size: 13px; line-height: 20px; font-weight: 700; color: #86c232; }
.case-head p { font: 9px/13px "Noto Sans", sans-serif; color: #555; }
.doc-title { text-align: center; font: 600 18px/27px "Noto Sans", sans-serif; color: #86c22c; }
.doc-actions { display: flex; width: max-content; margin: 10px auto 0; border: 1px solid #b5b5b5; border-radius: 7px; box-shadow: 0 0 4px #bbb; overflow: hidden; }
.doc-actions button { display: flex; align-items: center; gap: 2px; height: 28px; padding: 0 6px 5px 7px; border: 0; border-right: 1px solid #b5b5b5; background: #fff; font-size: 11px; color: #444; }
.doc-actions button:last-child { border-right: 0; }
.wide { padding-left: 3px; }
.activity { display: flex; align-items: center; gap: 15px; height: 16px; margin: 12px 0 20px; font-size: 11px; line-height: 16px; }
.activity a { text-shadow: 0 0 1px #6f9440; }
.activity hr { flex: 1; margin: 2px 0 0; border: 0; border-top: 1px solid #c9c9c9; }

/* pdf viewer */
.pdf { position: relative; display: flex; flex-direction: column; height: 600px; background: #323639; }
.pdf-bar { position: relative; display: grid; grid-template-columns: 320px 1fr auto; align-items: center; height: 56px; flex: none; color: #f1f1f1; font-size: 13px; box-shadow: 0 1px 4px #0009; background: #323639; }
.pdf-left { display: flex; align-items: center; gap: 24px; padding-left: 24px; font-size: 14px; line-height: 20px; }
.pdf-mid { display: flex; align-items: center; gap: 14px; }
.pdf-mid input { height: 20px; padding: 0; border: 0; background: #191b1c; color: #fff; text-align: center; font-size: 13px; }
.pdf-page { width: 24px; }
.pdf-zoom { width: 44px; }
.pdf-total { margin-left: -10px; margin-right: 12px; }
.pdf-divider { width: 1px; height: 15px; background: #6f7275; }
.fit { margin-left: 4px; }
.pdf-right { display: flex; align-items: center; gap: 21px; padding-right: 30px; }
.pdf-more { margin-left: 4px; }
.pdf-body { flex: 1; min-height: 0; display: flex; overflow: hidden; }
.thumbs { display: flex; flex-direction: column; align-items: center; gap: 24px; width: 283px; padding: 18px 0 0 2px; overflow: hidden; }
.thumbs figure { display: flex; flex-direction: column; align-items: center; flex: none; gap: 9px; height: 177px; font-size: 12px; color: #f1f1f1; }
.thumbs figure > svg { width: 108px; height: 152px; margin-top: 6px; background: #98999b; }
.thumbs .current { gap: 4px; }
.thumbs .current > svg { width: 120px; height: 164px; margin-top: 0; border: 6px solid #8ab4f8; background: #fff; }
.thumbs figcaption { line-height: 20px; }
.sheet-area { flex: 1; min-width: 0; padding: 3px 4px 0; background: #474b4f; overflow: hidden; }
.sheet { height: 100%; padding: 26px 23px 0 46px; background: #fff; color: #111; font-family: "Liberation Sans", sans-serif; }
.sheet-head { display: flex; justify-content: space-between; font: 14px/16px "Open Sans", sans-serif; padding-left: 8px; }
.sheet-head svg { margin-top: 2px; }
.cover { display: flex; gap: 10px; margin-top: 45px; }
.cover-title { width: 170px; height: 162px; flex: none; padding: 0 5px; background: #ccc; clip-path: polygon(0 0, 100% 0, 100% 86%, 93% 100%, 0 100%); font: 24px/32px "Open Sans", sans-serif; color: #000; }
.cover-info { flex: 1; min-width: 0; }
.plates { display: grid; grid-template-columns: 33fr 34fr; gap: 5px; }
.plates span { padding-left: 8px; background: #ccc; font-size: 14px; line-height: 31px; white-space: nowrap; clip-path: polygon(0 0, 100% 0, 100% 66%, 97% 100%, 0 100%); }
.cover ul { display: flex; flex-direction: column; gap: 4px; margin: 8px 0 0 9px; list-style: none; font-size: 12px; line-height: 12px; white-space: nowrap; }
.cover li { display: block; padding-left: 14px; }
.cover li::before { content: "–"; float: left; margin-left: -14px; }
.register { padding: 25px 0 0 4px; white-space: nowrap; }
.register h3 { font-size: 18px; line-height: 20px; font-weight: 400; }
.lead { margin: 5px 0 9px; font-size: 14px; line-height: 14px; }
.mono { font: 10px/10px "Liberation Mono", monospace; color: #555; }
.entry { display: grid; grid-template-columns: 42px 1fr; margin-top: 8px; }
.entry p + p { margin-top: 10px; }

/* message box floats over the document */
.message { position: absolute; left: 43.200%; top: 118px; width: 149px; border: 1px solid #666; background: #fff; color: #000; font-size: 11px; line-height: 16px; box-shadow: 3px 5px 14px #0006; }
.message-title { display: flex; align-items: center; gap: 5px; padding: 4px 3px 0; }
.message p { padding: 27px 11px 21px; }
.message-foot { display: flex; justify-content: flex-end; height: 42px; padding: 8px 15px; background: #f0f0f0; }
.message-foot button { width: 76px; height: 24px; padding: 0; border: 2px solid; border-color: #777 #666 #666 #777; background: #efefef; font-size: 11px; color: #000; box-shadow: inset 1px 1px #fff; }

/* reminders panel stays over the page corner */
.reminders { position: absolute; right: 19px; bottom: 0; display: flex; height: 606px; gap: 3px; }
.reminder-list { display: flex; flex-direction: column; gap: 5px; width: 208px; padding-top: 5px; overflow: hidden; font-family: "Noto Sans", sans-serif; }
.reminder { position: relative; flex: none; height: 78px; padding: 3px 6px; border: 1px solid #8a8a8a; border-radius: 6px; background: #fbfbfb; font-size: 9px; line-height: 13px; color: #555; white-space: nowrap; }
.reminder header { display: flex; justify-content: space-between; line-height: 14px; }
.reminder b { font: 700 8px/14px "Open Sans", sans-serif; color: #86c232; }
.dismiss { display: flex; align-items: center; gap: 2px; padding: 0; border: 0; background: none; font-size: 9px; line-height: 14px; color: #6f9440; }
.view { position: absolute; right: 6px; top: 23px; width: 29px; height: 20px; padding: 0 0 4px; border: 1px solid #aaa; border-radius: 5px; background: #fff; box-shadow: 0 0 2px #aaa; font-size: 7px; color: #777; }
.place { line-height: 15px; }
.reminder time { display: block; font-size: 8px; line-height: 12px; }
.load-all { flex: none; height: 60px; padding: 4px 6px; border: 1px solid #8a8a8a; border-radius: 6px; }
.load-all button { display: block; width: 100%; height: 28px; padding: 0 0 8px; border: 1px solid #aaa; border-radius: 5px; background: #fff; box-shadow: 0 0 4px #bbb; font-size: 9px; color: #555; }

/* taskbar */
.taskbar { display: flex; align-items: center; height: 40px; flex: none; color: #fff; background: linear-gradient(90deg, #1f1b1a, #2b211e 30%, #211c1a 60%, #2a2120 78%, #1c1c1d); }
.start { padding: 0 16px; }
.search { display: flex; align-items: center; width: 288px; height: 40px; padding: 0 3px 0 11px; background: #f2f2f2; border: 1px solid #ccc; margin-right: 3px; }
.search input { flex: 1; min-width: 0; padding: 0 0 0 11px; border: 0; background: none; font-size: 14px; outline: 0; }
.search input::placeholder { color: #333; opacity: 1; }
.search-art { display: grid; place-items: center; width: 72px; height: 32px; border-radius: 7px; background: #e2e2e2; }
.app { display: grid; place-items: center; width: 41px; height: 40px; margin-right: 8px; padding: 0; border: 0; background: none; flex: none; }
.task-view { margin-right: 10px; }
.open { border-bottom: 2px solid #76b9ed; padding-top: 2px; }
.lit { background: linear-gradient(#0000 55%, #5a5a5a 55%); }
.tray { display: flex; align-items: center; gap: 8px; height: 40px; margin: 0 4px 0 auto; padding-right: 20px; border-right: 1px solid #666; font-size: 12px; }
.clock { text-align: center; line-height: 18px; }
.notice { margin-left: 7px; }
```
